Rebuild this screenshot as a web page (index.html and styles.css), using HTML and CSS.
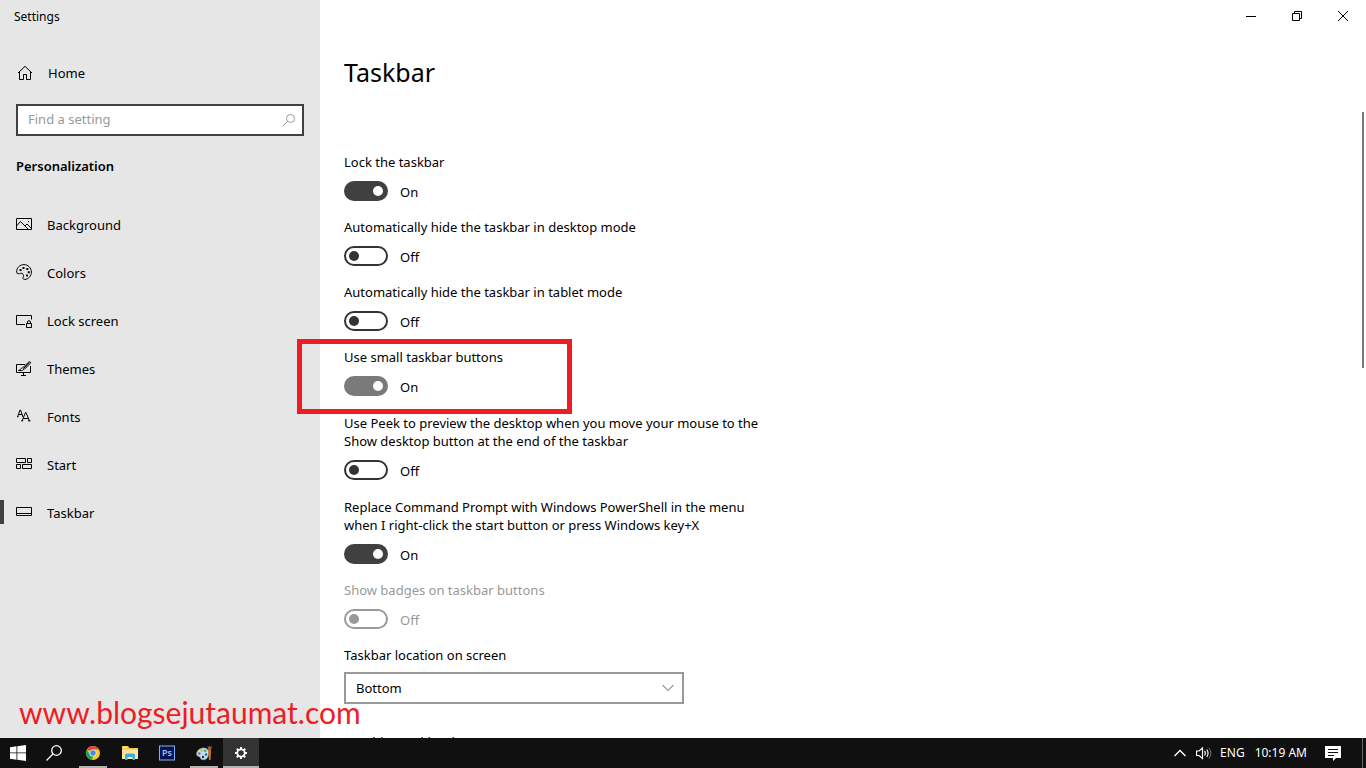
FILE: index.html
```html
<!DOCTYPE html>
<html lang="en">
<head>
<meta charset="utf-8">
<meta name="viewport" content="width=device-width, initial-scale=1">
<title>Settings</title>
<link rel="stylesheet" href="styles.css">
</head>
<body>
<div class="desktop">
  <div class="window">
    <aside class="sidebar">
      <div class="app-title">Settings</div>
      <a class="home" href="#home">
        <svg class="icon" viewBox="0 0 16 16"><path d="M1 8 L8 1.300 L15 8 M2.500 7 V14.500 H6.500 V9.500 H9.500 V14.500 H13.500 V7"/></svg>
        <span>Home</span>
      </a>
      <div class="search">
        <input class="search-input" type="text" placeholder="Find a setting" aria-label="Find a setting">
        <svg class="search-icon" viewBox="0 0 14 14"><circle cx="8.500" cy="5.500" r="4"/><path d="M5.500 8.500 L1 13"/></svg>
      </div>
      <h2 class="category">Personalization</h2>
      <nav class="nav">
        <a class="nav-item" href="#background">
          <svg class="icon" viewBox="0 0 16 16"><path d="M.5 2.500 H15.500 V13.500 H.5 Z M.5 10 L4.500 5.500 L12 13 M9 10 L11 8 L15.500 12.500"/><path d="M12 5.500 h1"/></svg>
          <span>Background</span>
        </a>
        <a class="nav-item" href="#colors">
          <svg class="icon" viewBox="0 0 16 16"><path d="M.6 8 C.6 3.500 4 .6 8 .6 S15.400 4 15.400 8 S12.300 15.400 8.800 15.400 C6.500 15.400 6.600 14 7.400 12.800 C8.200 11.300 6.500 8.500 4.500 9.300 C3 9.900 1 10.300 .6 8 Z"/><path class="solid" d="M3.500 5h2v2h-2z M6.500 3h2v2h-2z M10.300 4h2v2h-2z M11.800 7.200h2v2h-2z M10 10.500h2v2h-2z"/></svg>
          <span>Colors</span>
        </a>
        <a class="nav-item" href="#lockscreen">
          <svg class="icon" viewBox="0 0 16 16"><path d="M9 12.500 H.5 V3.500 H15.500 V7.500 M10.500 11.500 H15.500 V15.500 H10.500 Z M11.500 11 V10 C11.500 8.200 14.500 8.200 14.500 10 V11"/></svg>
          <span>Lock screen</span>
        </a>
        <a class="nav-item" href="#themes">
          <svg class="icon" viewBox="0 0 16 16"><path d="M9 4.500 H.5 V12.500 H14.500 V6 M7.500 12.500 V15 M5 15.500 H10 M2.500 10.500 C4.500 10.500 4.500 8 6.500 7.800 C8.500 8 8.500 10.500 5.500 10.500 Z M7 7.500 L13 1.800 C14 1.300 15 2.200 14.400 3.200 L8.500 9.200 M8 8 L13.500 2.800"/></svg>
          <span>Themes</span>
        </a>
        <a class="nav-item" href="#fonts">
          <svg class="icon" viewBox="0 0 16 16"><path d="M1.500 9 L4 2 H4.500 L7 9 M2.500 6.500 H6 M1 8.700 H2.500 M6 13 L9.500 4.500 H10 L13.500 13 M7.300 10.500 H12.200 M5.200 12.800 H7.200 M12 12.800 H14.500"/></svg>
          <span>Fonts</span>
        </a>
        <a class="nav-item" href="#start">
          <svg class="icon" viewBox="0 0 16 16"><path d="M.5 2.500 H9.500 V6.500 H.5 Z M11.500 2.500 H15.500 V6.500 H11.500 Z M.5 8.500 H4.500 V12.500 H.5 Z M6.500 8.500 H15.500 V12.500 H6.500 Z"/></svg>
          <span>Start</span>
        </a>
        <a class="nav-item active" href="#taskbar" aria-current="page">
          <svg class="icon" viewBox="0 0 16 16"><path d="M.5 3.500 H15.500 V11.500 H.5 Z M.5 9.500 H15.500"/></svg>
          <span>Taskbar</span>
        </a>
      </nav>
    </aside>

    <main class="content">
      <div class="window-controls">
        <button class="control" type="button" aria-label="Minimize"><svg viewBox="0 0 10 10"><path d="M0 5.500 H10"/></svg></button>
        <button class="control" type="button" aria-label="Restore"><svg viewBox="0 0 10 10"><path d="M.5 2.500 H7.500 V9.500 H.5 Z M2.500 2.500 V.5 H9.500 V7.500 H7.500"/></svg></button>
        <button class="control" type="button" aria-label="Close"><svg viewBox="0 0 10 10"><path d="M0 0 L10 10 M10 0 L0 10"/></svg></button>
      </div>
      <h1 class="page-title">Taskbar</h1>
      <div class="settings">
        <div class="setting">
          <label class="label" for="lock">Lock the taskbar</label>
          <div class="row"><input class="toggle" type="checkbox" id="lock" checked><span class="state">On</span></div>
        </div>
        <div class="setting">
          <label class="label" for="hide-desktop">Automatically hide the taskbar in desktop mode</label>
          <div class="row"><input class="toggle" type="checkbox" id="hide-desktop"><span class="state">Off</span></div>
        </div>
        <div class="setting">
          <label class="label" for="hide-tablet">Automatically hide the taskbar in tablet mode</label>
          <div class="row"><input class="toggle" type="checkbox" id="hide-tablet"><span class="state">Off</span></div>
        </div>
        <div class="setting marked">
          <label class="label" for="small">Use small taskbar buttons</label>
          <div class="row"><input class="toggle hovered" type="checkbox" id="small" checked><span class="state">On</span></div>
        </div>
        <div class="setting tall">
          <label class="label" for="peek">Use Peek to preview the desktop when you move your mouse to the<br>Show desktop button at the end of the taskbar</label>
          <div class="row"><input class="toggle" type="checkbox" id="peek"><span class="state">Off</span></div>
        </div>
        <div class="setting tall">
          <label class="label" for="powershell">Replace Command Prompt with Windows PowerShell in the menu<br>when I right-click the start button or press Windows key+X</label>
          <div class="row"><input class="toggle" type="checkbox" id="powershell" checked><span class="state">On</span></div>
        </div>
        <div class="setting disabled">
          <label class="label" for="badges">Show badges on taskbar buttons</label>
          <div class="row"><input class="toggle" type="checkbox" id="badges" disabled><span class="state">Off</span></div>
        </div>
        <div class="setting choice">
          <label class="label" for="location">Taskbar location on screen</label>
          <div class="select-box">
            <select class="select" id="location"><option>Bottom</option></select>
            <svg class="select-arrow" viewBox="0 0 12 8"><path d="M.5 1 L6 6.500 L11.500 1"/></svg>
          </div>
        </div>
        <div class="setting">
          <span class="label">Combine taskbar buttons</span>
        </div>
      </div>
      <div class="scroll-thumb"></div>
    </main>
    <div class="watermark">www.blogsejutaumat.com</div>
  </div>

  <footer class="taskbar">
    <div class="launchers">
      <button class="task" type="button" aria-label="Start"><svg viewBox="0 0 16 16"><path fill="#fff" d="M0 2.300 L6.500 1.300 V7.500 H0 Z M7.300 1.200 L16 0 V7.500 H7.300 Z M0 8.300 H6.500 V14.700 L0 13.700 Z M7.300 8.300 H16 V16 L7.300 14.800 Z"/></svg></button>
      <button class="task" type="button" aria-label="Search"><svg viewBox="0 0 16 16"><g fill="none" stroke="#fff" stroke-width="1.300"><circle cx="10.500" cy="5.500" r="4.800"/><path d="M7 9 L.5 15.500"/></g></svg></button>
    </div>
    <div class="apps">
      <button class="task open" type="button" aria-label="Chrome"><svg viewBox="0 0 16 16"><circle cx="8" cy="8" r="7" fill="#fbc916"/><path fill="#dd4b3e" d="M8 8 L2 4.300 A7 7 0 0 1 14 4.500 H8 Z"/><path fill="#20a15d" d="M1.900 4.500 L5 9.800 L8 11 L7 15 A7 7 0 0 1 1.900 4.500 Z"/><circle cx="8" cy="8" r="3.500" fill="#f1e9df"/><circle cx="8" cy="8" r="2.700" fill="#4589ee"/></svg></button>
      <button class="task" type="button" aria-label="File Explorer"><svg viewBox="0 0 16 16"><path fill="#f3c34c" d="M0 1 H6 L7.500 3 H16 V14 H0 Z"/><path fill="#ffe799" d="M0 4.500 H16 V14 H0 Z"/><path fill="#fff3c8" d="M1 2 H5 V3 H1 Z"/><path fill="#36b0e8" d="M3 15 V10 Q3 8.500 4.500 8.500 H11.500 Q13 8.500 13 10 V15 H10.500 V12 H5.500 V15 Z"/></svg></button>
      <button class="task" type="button" aria-label="Photoshop"><svg viewBox="0 0 16 16"><rect x=".5" y="1" width="15" height="14" fill="#07124f" stroke="#76b5f0"/><text class="ps" x="8" y="11" text-anchor="middle">Ps</text></svg></button>
      <button class="task open" type="button" aria-label="Paint"><svg viewBox="0 0 16 16"><path fill="#b8e1f5" stroke="#75a7c4" stroke-width=".5" d="M.5 9 C1 4.500 5 2.500 9 3 C13 3.800 13.500 9 11.500 12.500 C10 15.500 4.500 15.500 4.500 13 C4.500 11 1 12.500 .5 9 Z"/><circle cx="3.300" cy="8.500" r="1.300" fill="#d44935"/><circle cx="5.500" cy="5.500" r="1.200" fill="#e7b926"/><circle cx="9" cy="5.700" r="1.300" fill="#54a653"/><circle cx="10" cy="9.500" r="1.200" fill="#315ca9"/><circle cx="7" cy="12" r="1.200" fill="#26303a"/><path fill="#d87525" d="M12 5 H15 L14.500 15 H13 Z"/><path fill="#9b603b" d="M11.500 1 L13 2 L13.500 0 L14 2 L16 1 L15 5 H12.300 Z"/></svg></button>
      <button class="task open current" type="button" aria-label="Settings"><svg viewBox="0 0 16 16"><g fill="none" stroke="#fff"><circle cx="8" cy="8" r="3.700" stroke-width="1.800"/><path stroke-width="2" d="M8 2 V4 M8 12 V14 M2 8 H4 M12 8 H14 M3.800 3.800 L5.200 5.200 M10.800 10.800 L12.200 12.200 M12.200 3.800 L10.800 5.200 M5.200 10.800 L3.800 12.200"/></g></svg></button>
    </div>
    <div class="tray">
      <button class="tray-button" type="button" aria-label="Show hidden icons"><svg viewBox="0 0 16 16"><path stroke-width="1.400" d="M2.500 11 L8 5.500 L13.500 11"/></svg></button>
      <button class="tray-button" type="button" aria-label="Volume"><svg viewBox="0 0 16 16"><path stroke-width="1.200" d="M.5 6 H3 L6.500 3 V13.500 L3 10.500 H.5 Z M8.500 6 Q10.200 8 8.500 10.500 M10.800 4.500 Q13.300 8 10.800 12"/><path stroke="#777" d="M13 3 Q16.800 8 13 13.500"/></svg></button>
      <button class="tray-text language" type="button">ENG</button>
      <button class="tray-text" type="button">10:19 AM</button>
      <button class="tray-button notices" type="button" aria-label="Notifications"><svg viewBox="0 0 16 16"><path fill="#fff" stroke="none" d="M0 1 H16 V13 H11 L8 16 V13 H0 Z"/><path stroke="#111" d="M3 4.500 H13 M3 7.500 H13 M3 10.500 H9"/></svg></button>
      <button class="show-desktop" type="button" aria-label="Show desktop"></button>
    </div>
  </footer>
</div>
</body>
</html>
```
FILE: styles.css
```css
*, *::before, *::after { box-sizing: border-box; }

body {
  margin: 0;
  color: #000;
  font-family: "Noto Sans", "Open Sans", sans-serif;
  font-size: 13px;
  line-height: 18px;
}

button {
  border: 0;
  padding: 0;
  background: transparent;
  font: inherit;
}

a { color: inherit; text-decoration: none; }

svg { display: block; }

.desktop {
  display: grid;
  grid-template-rows: minmax(0, 1fr) 30px;
  height: 100vh;
  overflow: hidden;
}

.window {
  position: relative;
  display: grid;
  grid-template-columns: 320px minmax(0, 1fr);
  grid-template-rows: minmax(0, 1fr);
  min-height: 0;
  overflow: hidden;
}

.sidebar { background: #e6e6e6; }

.app-title {
  padding: 0 14px;
  font-size: 12px;
  line-height: 33px;
}

.home {
  display: flex;
  align-items: center;
  gap: 15px;
  height: 48px;
  margin-top: 16px;
  padding: 0 17px;
}

.icon {
  width: 16px;
  height: 16px;
  fill: none;
  stroke: #000;
}

.icon .solid { fill: #000; stroke: none; }

.search { position: relative; margin: 7px 16px 0; }

.search-input {
  display: block;
  width: 100%;
  height: 32px;
  padding: 0 32px 2px 10px;
  border: 2px solid #404040;
  border-radius: 0;
  background: #fff;
  font: inherit;
}

.search-input::placeholder { color: #999; }

.search-icon {
  position: absolute;
  top: 9px;
  right: 8px;
  width: 14px;
  height: 14px;
  fill: none;
  stroke: #999;
}

.category {
  margin: 20px 16px 0;
  font-size: 13px;
  font-weight: 600;
  line-height: 20px;
}

.nav { margin-top: 25px; }

.nav-item {
  position: relative;
  display: flex;
  align-items: center;
  gap: 15px;
  height: 48px;
  padding: 0 16px;
}

.nav-item .icon { margin-bottom: 2px; }

.active::before {
  content: "";
  position: absolute;
  left: 0;
  top: 11px;
  width: 4px;
  height: 24px;
  background: #404040;
}

.content {
  position: relative;
  background: #fff;
}

.window-controls { display: flex; justify-content: flex-end; }

.control {
  display: grid;
  place-items: center;
  width: 46px;
  height: 32px;
}

.control svg {
  width: 10px;
  height: 10px;
  overflow: visible;
  fill: none;
  stroke: #000;
}

.page-title {
  margin: 20px 24px 0;
  font-size: 25px;
  font-weight: 400;
  line-height: 40px;
}

.settings {
  display: flex;
  flex-direction: column;
  gap: 17px;
  padding: 61px 24px 0;
}

.setting {
  position: relative;
  display: flex;
  flex-direction: column;
  align-items: flex-start;
  gap: 10px;
}

.tall { padding-top: 1px; }

.row { display: flex; align-items: center; gap: 12px; height: 20px; }

.state { padding-top: 2px; }

.toggle {
  appearance: none;
  display: flex;
  align-items: center;
  width: 44px;
  height: 20px;
  margin: 0;
  padding: 0 3px;
  border: 2px solid #333;
  border-radius: 10px;
  background: #fff;
}

.toggle::before {
  content: "";
  width: 10px;
  height: 10px;
  border-radius: 50%;
  background: #333;
}

.toggle:checked {
  justify-content: flex-end;
  border-color: #404040;
  background: #404040;
}

.toggle:checked::before { background: #fff; }

.toggle.hovered { border-color: #7a7a7a; background: #7a7a7a; }

.disabled { color: #999; }
.disabled .toggle { border-color: #999; }
.disabled .toggle::before { background: #999; }

.marked::after {
  content: "";
  position: absolute;
  left: -47px;
  top: -9px;
  width: 275px;
  height: 75px;
  border: 5px solid #ee1c24;
  pointer-events: none;
}

.choice { gap: 8px; padding-bottom: 12px; }

.select-box { position: relative; width: 340px; max-width: 100%; }

.select {
  appearance: none;
  display: block;
  width: 100%;
  height: 32px;
  padding: 0 32px 0 10px;
  border: 2px solid #999;
  border-radius: 0;
  background: #fff;
  color: #000;
  font: inherit;
}

.select-arrow {
  position: absolute;
  top: 12px;
  right: 10px;
  width: 12px;
  height: 8px;
  fill: none;
  stroke: #555;
  pointer-events: none;
}

.scroll-thumb {
  position: absolute;
  top: 112px;
  right: 2px;
  width: 2px;
  height: 256px;
  background: #7a7a7a;
}

.watermark {
  position: absolute;
  left: 19px;
  bottom: 8px;
  color: #ee1c24;
  font-family: Lato, sans-serif;
  font-size: 30px;
  line-height: 36px;
}

.taskbar {
  display: flex;
  justify-content: space-between;
  background: #101010;
  color: #fff;
}

.launchers, .apps, .tray { display: flex; }

.apps { gap: 1px; margin: 0 auto 0 3px; }

.task {
  position: relative;
  display: grid;
  place-items: center;
  width: 36px;
  height: 30px;
}

.task svg { width: 16px; height: 16px; }

.ps { fill: #8ac5ff; font-size: 9px; font-weight: 600; }

.open::after {
  content: "";
  position: absolute;
  left: 4px;
  right: 4px;
  bottom: 0;
  height: 2px;
  background: #b3b3b3;
}

.current { background: #333; }
.current::after { left: 0; right: 0; }

.tray { align-items: center; }

.tray-button { display: grid; place-items: center; width: 24px; height: 30px; }

.tray-button svg { width: 16px; height: 16px; fill: none; stroke: #fff; }

.tray-text {
  color: #fff;
  font-size: 12px;
  line-height: 30px;
  white-space: nowrap;
}

.language { margin: 0 10px 0 4px; }

.notices { margin: 0 17px 0 14px; }

.show-desktop { width: 4px; height: 30px; border-left: 1px solid #666; }
```
